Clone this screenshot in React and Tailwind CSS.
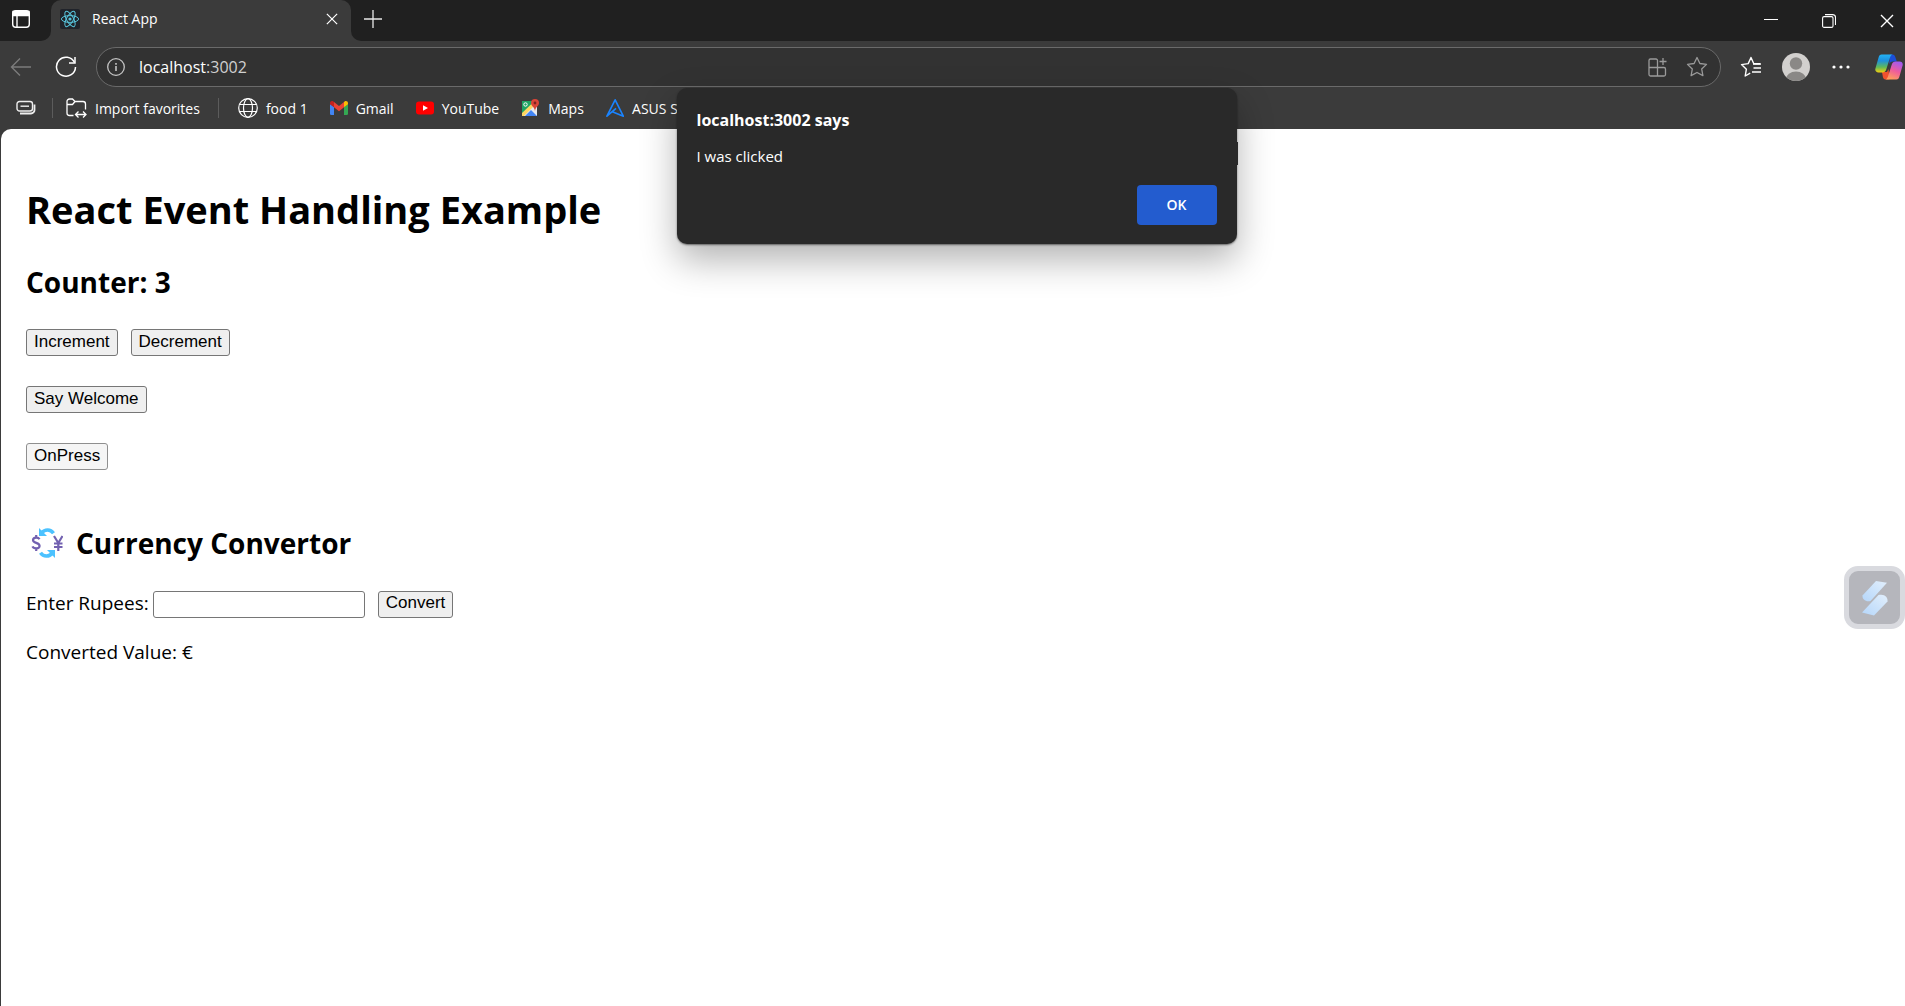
import { useState } from "react";

function TabActionsIcon() {
  return (
    <svg width="20" height="20" viewBox="0 0 20 20" fill="none" stroke="#fff" strokeWidth="1.4">
      <rect x="1.7" y="1.7" width="16.6" height="16.6" rx="3" />
      <path d="M2 2.5h16v4H2z" fill="#fff" />
      <path d="M6 6v12" />
    </svg>
  );
}

function ReactFavicon() {
  return (
    <svg width="20" height="20" viewBox="0 0 20 20" fill="none" stroke="#58c4dc" strokeWidth="1">
      <rect width="20" height="20" rx="2" fill="#20232a" stroke="none" />
      <ellipse cx="10" cy="10" rx="8.6" ry="3.4" />
      <ellipse cx="10" cy="10" rx="8.6" ry="3.4" transform="rotate(60 10 10)" />
      <ellipse cx="10" cy="10" rx="8.6" ry="3.4" transform="rotate(120 10 10)" />
      <circle cx="10" cy="10" r="1.6" fill="#58c4dc" stroke="none" />
    </svg>
  );
}

function CrossIcon({ size }) {
  return (
    <svg width={size} height={size} viewBox="0 0 14 14" fill="none" stroke="#fff" strokeWidth="1.4">
      <path d="M1 1l12 12M13 1L1 13" />
    </svg>
  );
}

function PlusIcon() {
  return (
    <svg width="18" height="18" viewBox="0 0 18 18" fill="none" stroke="#e8e8e8" strokeWidth="1.3">
      <path d="M9 0v18M0 9h18" />
    </svg>
  );
}

function MinimizeIcon() {
  return (
    <svg width="14" height="14" viewBox="0 0 14 14" stroke="#fff" strokeWidth="1">
      <path d="M0 5.5h14" />
    </svg>
  );
}

function RestoreIcon() {
  return (
    <svg width="14" height="14" viewBox="0 0 14 14" fill="none" stroke="#fff" strokeWidth="1.1">
      <rect x="0.6" y="2.6" width="10.4" height="10.8" rx="1.5" />
      <path d="M3 0.6h7.5a3 3 0 0 1 3 3V11" />
    </svg>
  );
}

function BackIcon() {
  return (
    <svg width="22" height="20" viewBox="0 0 22 20" fill="none" stroke="#7c7c7c" strokeWidth="1.4">
      <path d="M21 10H1.5M10 1.5L1.5 10l8.5 8.5" />
    </svg>
  );
}

function ReloadIcon() {
  return (
    <svg width="22" height="22" viewBox="0 0 22 22" fill="none" stroke="#fff" strokeWidth="1.5">
      <path d="M19.5 6.5A9.5 9.5 0 1 0 20.5 11" />
      <path d="M20 1v6h-6" />
    </svg>
  );
}

function InfoIcon() {
  return (
    <svg width="18" height="18" viewBox="0 0 18 18" fill="none" stroke="#c4c4c4" strokeWidth="1.3">
      <circle cx="9" cy="9" r="8.3" />
      <path d="M9 8v5M9 5v1.7" strokeWidth="1.6" />
    </svg>
  );
}

function AppsAddIcon() {
  return (
    <svg width="20" height="20" viewBox="0 0 20 20" fill="none" stroke="#9a9a9a" strokeWidth="1.3">
      <path d="M10.5 10.500V3.500A1.500 1.500 0 0 0 9 2H3.500A1.500 1.500 0 0 0 2 3.500v14A1.500 1.500 0 0 0 3.500 19H17a1.500 1.500 0 0 0 1.500-1.500V12a1.500 1.500 0 0 0-1.500-1.500H2M10.500 10.500V19" />
      <path d="M16 1v7M12.500 4.500h7" />
    </svg>
  );
}

function StarIcon() {
  return (
    <svg width="22" height="22" viewBox="0 0 22 22" fill="none" stroke="#9a9a9a" strokeWidth="1.3" strokeLinejoin="round">
      <path d="M11 1.5l2.9 6 6.6.9-4.8 4.6 1.2 6.6-5.9-3.1-5.9 3.1 1.2-6.6L1.500 8.400l6.600-.9z" />
    </svg>
  );
}

function FavoritesIcon() {
  return (
    <svg width="22" height="22" viewBox="0 0 22 22" fill="none" stroke="#fff" strokeWidth="1.4" strokeLinejoin="round">
      <path d="M20 7.8h-6.200L11 1.500 8.200 7.600l-6.700 1 4.900 4.600L5.200 20l5-2.900" />
      <path d="M13 8h8M13.500 12h7.500M12 16h9" />
    </svg>
  );
}

function AvatarIcon() {
  return (
    <svg width="28" height="28" viewBox="0 0 28 28">
      <defs>
        <clipPath id="avatar"><circle cx="14" cy="14" r="14" /></clipPath>
      </defs>
      <g clipPath="url(#avatar)">
        <path d="M0 0h28v28H0z" fill="#d2d0ce" />
        <circle cx="14" cy="10.5" r="6.2" fill="#8a8886" />
        <ellipse cx="14" cy="26" rx="10" ry="7.5" fill="#8a8886" />
      </g>
    </svg>
  );
}

function DotsIcon() {
  return (
    <svg width="18" height="6" viewBox="0 0 18 6" fill="#fff">
      <circle cx="2" cy="3" r="1.6" />
      <circle cx="9" cy="3" r="1.6" />
      <circle cx="16" cy="3" r="1.6" />
    </svg>
  );
}

function CopilotIcon() {
  return (
    <svg width="28" height="26" viewBox="0 0 28 26">
      <defs>
        <linearGradient id="cp-left" x1="0" y1="0" x2="0" y2="1">
          <stop offset="0" stopColor="#23b3f5" />
          <stop offset="0.35" stopColor="#1e90dd" />
          <stop offset="0.7" stopColor="#5fb95a" />
          <stop offset="1" stopColor="#f5d00f" />
        </linearGradient>
        <linearGradient id="cp-right" x1="0.7" y1="0" x2="0.3" y2="1">
          <stop offset="0" stopColor="#a259f0" />
          <stop offset="0.5" stopColor="#ee5c9c" />
          <stop offset="1" stopColor="#ffa05a" />
        </linearGradient>
      </defs>
      <path d="M15 .5h2.500c1.500 0 2.300 1 2.800 2.500l1.500 4.500h-4c-2 0-3 1-3.600 3z" fill="#1b4fd8" />
      <path d="M7 18h5l1.500-3 1 10.500h-4c-1.500 0-2.200-1-2.600-2.500z" fill="#f0522e" />
      <path d="M6.500.5h11c-1.500.5-2.200 2-2.700 3.700l-3.500 11c-.7 2.200-2 3.300-4 3.300H3.500c-2.500 0-3.800-1.800-3-4.300l3-10.500C4.100 1.600 5 .5 6.500.5z" fill="url(#cp-left)" />
      <path d="M21.500 25.500h-11c1.500-.5 2.200-2 2.700-3.700l3.500-11c.7-2.200 2-3.300 4-3.300h3.800c2.500 0 3.800 1.800 3 4.300l-3 10.500c-.6 2.100-1.500 3.200-3 3.200z" fill="url(#cp-right)" />
    </svg>
  );
}

function CardsIcon() {
  return (
    <svg width="20" height="16" viewBox="0 0 20 16" fill="none" stroke="#eee" strokeWidth="1.4">
      <rect x="1" y="1.5" width="15.5" height="9.5" rx="2.5" />
      <path d="M4.500 6.200h8.500" />
      <path d="M18.500 4.500v5.500a3.500 3.500 0 0 1-3.500 3.500H4" strokeWidth="1.8" />
    </svg>
  );
}

function ImportFolderIcon() {
  return (
    <svg width="21" height="20" viewBox="0 0 21 20" fill="none" stroke="#fff" strokeWidth="1.3">
      <path d="M7.500 17.500H3.500A2.500 2.500 0 0 1 1 15V3.500A2.500 2.500 0 0 1 3.500 1H6.500l2.500 2.500h8A2.500 2.500 0 0 1 19.500 6v5.500" />
      <path d="M1 6.500h5.500L9 3.500" />
      <path d="M9.500 16.500h10.500M12.500 13.500l-3 3 3 3M17 13.500l3 3-3 3" />
    </svg>
  );
}

function GlobeIcon() {
  return (
    <svg width="20" height="20" viewBox="0 0 20 20" fill="none" stroke="#fff" strokeWidth="1.2">
      <circle cx="10" cy="10" r="9.3" />
      <ellipse cx="10" cy="10" rx="4.5" ry="9.3" />
      <path d="M1.500 6.500h17M1.500 13.500h17" />
    </svg>
  );
}

function GmailIcon() {
  return (
    <svg width="18" height="14" viewBox="0 0 18 14">
      <path d="M0 3l4 3v8H1.300A1.300 1.300 0 0 1 0 12.700z" fill="#4285f4" />
      <path d="M18 3l-4 3v8h2.700a1.300 1.300 0 0 0 1.300-1.300z" fill="#34a853" />
      <path d="M4 1l5 3.900L14 1v5.300l-5 3.900-5-3.900z" fill="#ea4335" />
      <path d="M0 2.200C0 .3 2-.6 3.400.5L4 1v5.300L0 3.300z" fill="#c5221f" />
      <path d="M18 2.200c0-1.900-2-2.800-3.400-1.700L14 1v5.300l4-3z" fill="#fbbc04" />
    </svg>
  );
}

function YouTubeIcon() {
  return (
    <svg width="18" height="14" viewBox="0 0 18 14">
      <rect y="0.5" width="18" height="13" rx="3" fill="#f00" />
      <path d="M7 4.300L12 7l-5 2.700z" fill="#fff" />
    </svg>
  );
}

function MapsIcon() {
  return (
    <svg width="19" height="18" viewBox="0 0 19 18">
      <path d="M1 2h15v15H1z" fill="#1fa463" />
      <path d="M1 17L16 3v14z" fill="#e8eaed" />
      <path d="M4 17l6-6 6 6z" fill="#4285f4" />
      <path d="M1 17v-3L12 3.500l2 2.500L3 17z" fill="#fdd663" />
      <circle cx="4.5" cy="5.5" r="1.7" fill="none" stroke="#fff" />
      <path d="M14 0a4 4 0 0 1 4 4c0 3-3.300 3.500-4 8-.7-4.500-4-5-4-8a4 4 0 0 1 4-4z" fill="#db4437" />
      <circle cx="14" cy="4" r="1.4" fill="#7b231e" />
    </svg>
  );
}

function AsusIcon() {
  return (
    <svg width="20" height="20" viewBox="0 0 20 20" fill="none" stroke="#1a84ff" strokeWidth="1.8" strokeLinejoin="round">
      <path d="M11 10.500L1 19 10 1l9 18-12-5" />
    </svg>
  );
}

function ExchangeIcon() {
  return (
    <svg width="32" height="32" viewBox="0 0 32 32" fill="none" aria-hidden="true">
      <g stroke="#4cc2ff" strokeWidth="3.6">
        <path d="M10.500 6C14 1.800 19.500 2 22.500 6.300" />
        <path d="M21.500 26C18 30.200 12.500 30 9.500 25.700" />
      </g>
      <path d="M8 1v8h8z" fill="#4cc2ff" />
      <path d="M24 31v-8h-8z" fill="#4cc2ff" />
      <g stroke="#7261b0" strokeWidth="2.2">
        <path d="M8.500 12.200C7.500 10 2.200 9.700 2 13c-.1 3.500 6.700 2.300 6.600 6-.2 3.300-6 3-7.100.3M5.200 8v3M5.200 21v3" />
        <path d="M23 9l4.300 7L31.500 9M27.300 15.500V24M23 16.500h8.500M23 20h8.500" />
      </g>
    </svg>
  );
}

function AssistantIcon() {
  return (
    <svg width="28" height="36" viewBox="0 0 28 36">
      <defs>
        <linearGradient id="assist" x1="1" y1="0" x2="0" y2="1">
          <stop offset="0" stopColor="#e2effc" />
          <stop offset="1" stopColor="#b5d6fa" />
        </linearGradient>
      </defs>
      <path d="M15 1l11 1.800L9.500 21C5 22.500 1 19 1.500 15.500z" fill="url(#assist)" />
      <path d="M17.500 15c6-1.500 9.500 2 9 6.500L13 35.500 1 32.500z" fill="url(#assist)" />
    </svg>
  );
}

function Bookmark({ icon, children }) {
  return (
    <a href="#" className="flex shrink-0 items-center gap-2 whitespace-nowrap">
      {icon}
      <span>{children}</span>
    </a>
  );
}

function PageButton({ children, className = "bg-[#efefef] border-[#767676]", onClick }) {
  return (
    <button
      type="button"
      onClick={onClick}
      className={`flex h-[27px] items-center rounded-[3px] border px-[7px] pb-0.5 font-['Liberation_Sans',sans-serif] text-[17px] leading-6 ${className}`}
    >
      {children}
    </button>
  );
}

function BrowserHeader() {
  return (
    <header className="bg-[#3b3b3b] text-white">
      <div className="flex h-[41px] bg-[#3b3b3b]">
        <div className="flex w-[51px] items-center rounded-br-[10px] bg-[#202020] pb-1 pl-[11px]">
          <button type="button" aria-label="Tab actions"><TabActionsIcon /></button>
        </div>
        <div className="w-[300px] bg-[#202020]">
          <div className="flex h-full items-center rounded-t-[10px] bg-[#3b3b3b] pr-3 pb-1 pl-[9px]">
            <ReactFavicon />
            <span className="ml-3 flex-1 text-[14px]">React App</span>
            <button type="button" aria-label="Close tab" className="px-px"><CrossIcon size={12} /></button>
          </div>
        </div>
        <div className="flex flex-1 items-center rounded-bl-[10px] bg-[#202020] pb-1 pl-[13px]">
          <button type="button" aria-label="New tab"><PlusIcon /></button>
          <div className="ml-auto flex items-center gap-11 pt-1 pr-[11px]">
            <button type="button" aria-label="Minimize"><MinimizeIcon /></button>
            <button type="button" aria-label="Restore"><RestoreIcon /></button>
            <button type="button" aria-label="Close"><CrossIcon size={14} /></button>
          </div>
        </div>
      </div>
      <div className="flex h-[52px] items-center pr-[2px] pl-[10px]">
        <button type="button" aria-label="Back"><BackIcon /></button>
        <button type="button" aria-label="Reload" className="ml-[23px]"><ReloadIcon /></button>
        <div className="ml-[19px] flex h-10 flex-1 items-center rounded-full border border-[#6a6a6a] bg-[#323232] pr-3 pl-[10px]">
          <InfoIcon />
          <span className="ml-[14px] flex-1 text-[16px]">localhost<span className="text-[#d0d0d0]">:3002</span></span>
          <div className="flex items-center gap-[19px]">
            <button type="button" aria-label="Apps"><AppsAddIcon /></button>
            <button type="button" aria-label="Add to favorites"><StarIcon /></button>
          </div>
        </div>
        <div className="ml-[19px] flex items-center">
          <button type="button" aria-label="Favorites"><FavoritesIcon /></button>
          <button type="button" aria-label="Profile" className="ml-5"><AvatarIcon /></button>
          <button type="button" aria-label="Menu" className="ml-[22px]"><DotsIcon /></button>
          <button type="button" aria-label="Copilot" className="ml-[25px]"><CopilotIcon /></button>
        </div>
      </div>
      <nav className="flex h-9 items-center gap-[22px] overflow-hidden pb-[6px] pl-4 text-[14px]">
        <button type="button" aria-label="Workspaces" className="-mr-1.5"><CardsIcon /></button>
        <span className="-mr-[9px] h-5 w-px bg-[#5c5c5c]" />
        <Bookmark icon={<ImportFolderIcon />}>Import favorites</Bookmark>
        <span className="-mr-[3px] -ml-1 h-5 w-px bg-[#5c5c5c]" />
        <Bookmark icon={<GlobeIcon />}>food 1</Bookmark>
        <Bookmark icon={<GmailIcon />}>Gmail</Bookmark>
        <Bookmark icon={<YouTubeIcon />}>YouTube</Bookmark>
        <Bookmark icon={<MapsIcon />}>Maps</Bookmark>
        <div className="w-[72px] overflow-hidden">
          <Bookmark icon={<AsusIcon />}>ASUS S</Bookmark>
        </div>
      </nav>
    </header>
  );
}

function AlertDialog({ onClose }) {
  return (
    <div className="absolute inset-x-0 top-[88px] flex justify-center pl-2">
      <div
        role="alertdialog"
        aria-labelledby="alert-title"
        className="relative w-[560px] rounded-[10px] bg-[#292929] px-5 pt-5 pb-[19px] text-white shadow-[0_1px_2px_rgba(0,0,0,0.5),0_16px_36px_rgba(0,0,0,0.3)]"
      >
        <span className="absolute top-[54px] -right-px h-[23px] w-px bg-[#292929]" />
        <h2 id="alert-title" className="text-[16px] leading-6 font-bold">localhost:3002 says</h2>
        <p className="mt-3 text-[15px] leading-6">I was clicked</p>
        <div className="mt-[17px] flex justify-end">
          <button type="button" onClick={onClose} className="h-10 w-20 rounded-[4px] bg-[#235ccf] pb-0.5 text-[14px] font-semibold">OK</button>
        </div>
      </div>
    </div>
  );
}

export default function App() {
  const [count, setCount] = useState(3);
  const [open, setOpen] = useState(true);
  const [rupees, setRupees] = useState("");
  return (
    <div className="relative flex min-h-screen flex-col bg-[#3b3b3b] font-['Open_Sans','Noto_Sans',sans-serif]">
      <BrowserHeader />
      <main className="ml-px flex-1 rounded-tl-[10px] bg-white pt-[53px] pl-[25px] text-black">
        <h1 className="text-[38px] leading-[54px] font-bold">React Event Handling Example</h1>
        <h2 className="mt-[26px] text-[28px] leading-10 font-bold">Counter: {count}</h2>
        <div className="mt-[27px] flex gap-[13px]">
          <PageButton onClick={() => setCount(count + 1)}>Increment</PageButton>
          <PageButton onClick={() => setCount(count - 1)}>Decrement</PageButton>
        </div>
        <div className="mt-[30px] flex"><PageButton>Say Welcome</PageButton></div>
        <div className="mt-[30px] flex">
          <PageButton className="border-[#8f8f8f] bg-[#f5f5f5]" onClick={() => setOpen(true)}>OnPress</PageButton>
        </div>
        <h2 className="mt-[53px] flex items-center gap-[13px] pl-[5px] text-[28px] leading-10 font-bold">
          <ExchangeIcon />
          Currency Convertor
        </h2>
        <form className="mt-[27px] flex items-center" onSubmit={(e) => e.preventDefault()}>
          <label htmlFor="rupees" className="pb-0.5 text-[19px] leading-[26px]">Enter Rupees:</label>
          <input
            id="rupees"
            value={rupees}
            onChange={(e) => setRupees(e.target.value)}
            className="mr-[13px] ml-1 h-[27px] w-[212px] rounded-[3px] border border-[#767676] bg-white px-1"
          />
          <PageButton>Convert</PageButton>
        </form>
        <p className="mt-5 text-[19px] leading-7">Converted Value: €</p>
      </main>
      <button
        type="button"
        aria-label="Assistant"
        className="absolute top-[566px] right-0 flex h-[63px] w-[61px] items-center justify-center rounded-[14px] border-[5px] border-[#d9dadf] bg-[#b5b6bc]"
      >
        <AssistantIcon />
      </button>
      {open && <AlertDialog onClose={() => setOpen(false)} />}
    </div>
  );
}
